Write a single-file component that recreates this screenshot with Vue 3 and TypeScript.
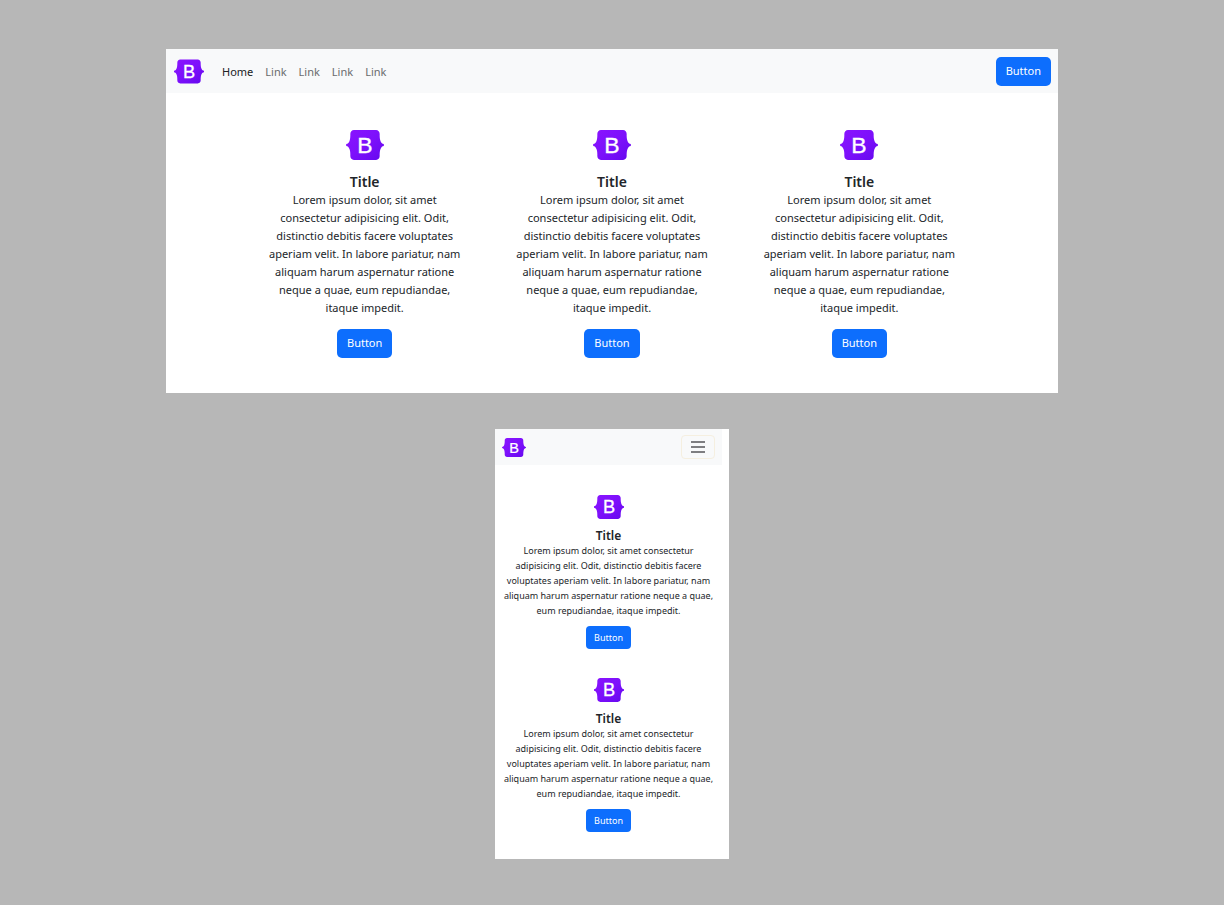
<script setup lang="ts">
interface NavLink {
  id: number
  label: string
  active: boolean
}

interface Feature {
  id: number
  title: string
  text: string
  action: string
}

const links: NavLink[] = [
  { id: 1, label: 'Home', active: true },
  { id: 2, label: 'Link', active: false },
  { id: 3, label: 'Link', active: false },
  { id: 4, label: 'Link', active: false },
  { id: 5, label: 'Link', active: false },
]

const wideText = [
  'Lorem ipsum dolor, sit amet',
  'consectetur adipisicing elit. Odit,',
  'distinctio debitis facere voluptates',
  'aperiam velit. In labore pariatur, nam',
  'aliquam harum aspernatur ratione',
  'neque a quae, eum repudiandae,',
  'itaque impedit.',
].join('\n')

const narrowText = [
  'Lorem ipsum dolor, sit amet consectetur',
  'adipisicing elit. Odit, distinctio debitis facere',
  'voluptates aperiam velit. In labore pariatur, nam',
  'aliquam harum aspernatur ratione neque a quae,',
  'eum repudiandae, itaque impedit.',
].join('\n')

function makeFeatures(count: number, text: string): Feature[] {
  return Array.from({ length: count }, (_, i) => ({
    id: i + 1,
    title: 'Title',
    text,
    action: 'Button',
  }))
}

const wideFeatures = makeFeatures(3, wideText)
const narrowFeatures = makeFeatures(2, narrowText)
</script>

<template>
  <svg class="defs" aria-hidden="true">
    <defs>
      <linearGradient id="brand-fill" x1="0" y1="0" x2="1" y2="1">
        <stop offset="0" stop-color="#8a14ff" />
        <stop offset="0.5" stop-color="#7d10fb" />
        <stop offset="1" stop-color="#6508ee" />
      </linearGradient>
      <symbol id="brand" viewBox="0 0 512 408">
        <path
          fill="url(#brand-fill)"
          d="M106.342 0c-29.214 0-50.827 25.58-49.86 53.32.927 26.647-.278 61.165-8.966 89.31C38.802 170.862 24.07 188.707 0 191v26c24.069 2.293 38.802 20.138 47.516 48.37 8.688 28.145 9.893 62.663 8.965 89.311C55.515 382.419 77.128 408 106.342 408h299.353c29.214 0 50.827-25.58 49.861-53.319-.928-26.648.277-61.166 8.964-89.311 8.715-28.232 23.411-46.077 47.48-48.37v-26c-24.069-2.293-38.765-20.138-47.48-48.37-8.687-28.145-9.892-62.663-8.964-89.31C456.522 25.58 434.909 0 405.695 0H106.342z"
        />
        <text
          x="256"
          y="312"
          text-anchor="middle"
          font-family="Liberation Sans, Arial, sans-serif"
          font-size="312"
          font-weight="400"
          fill="#fff"
          stroke="#fff"
          stroke-width="5"
        >B</text>
      </symbol>
    </defs>
  </svg>

  <main class="stage">
    <section class="screen wide">
      <nav class="navbar">
        <svg class="brand" role="img" aria-label="Bootstrap"><use href="#brand" /></svg>
        <ul class="links">
          <li v-for="link in links" :key="link.id">
            <a href="#" class="link" :class="{ active: link.active }">{{ link.label }}</a>
          </li>
        </ul>
        <button type="button" class="btn">Button</button>
      </nav>
      <div class="features">
        <article v-for="item in wideFeatures" :key="item.id" class="feature">
          <svg class="mark" aria-hidden="true"><use href="#brand" /></svg>
          <h2 class="title">{{ item.title }}</h2>
          <p class="text">{{ item.text }}</p>
          <button type="button" class="btn">{{ item.action }}</button>
        </article>
      </div>
    </section>

    <section class="screen narrow">
      <nav class="navbar">
        <svg class="brand" role="img" aria-label="Bootstrap"><use href="#brand" /></svg>
        <button type="button" class="toggler" aria-label="Toggle navigation">
          <svg class="bars" viewBox="0 0 16 12" aria-hidden="true">
            <path d="M1 1h14M1 6h14M1 11h14" />
          </svg>
        </button>
      </nav>
      <div class="features">
        <article v-for="item in narrowFeatures" :key="item.id" class="feature">
          <svg class="mark" aria-hidden="true"><use href="#brand" /></svg>
          <h2 class="title">{{ item.title }}</h2>
          <p class="text">{{ item.text }}</p>
          <button type="button" class="btn">{{ item.action }}</button>
        </article>
      </div>
    </section>
  </main>
</template>

<style>
body {
  margin: 0;
  background: #b7b7b7;
}
</style>

<style scoped>
.defs {
  position: absolute;
  width: 0;
  height: 0;
}

.stage {
  box-sizing: border-box;
  min-height: 100vh;
  padding: 49px 16px 46px;
  display: flex;
  flex-direction: column;
  align-items: center;
  gap: 36px;
  background: #b7b7b7;
  color: #212529;
  font-family: 'Noto Sans', 'Open Sans', sans-serif;
}

.screen {
  box-sizing: border-box;
  width: 100%;
  background: #fff;
}

.navbar {
  display: flex;
  align-items: center;
  background: #f8f9fa;
}

.links {
  flex: 1;
  display: flex;
  gap: 12px;
  margin: 0;
  padding: 0;
  list-style: none;
}

.link {
  color: #6a6b6d;
  text-decoration: none;
}

.link.active {
  color: #202124;
}

.btn {
  display: block;
  box-sizing: border-box;
  border: 0;
  background: #0d6efd;
  color: #fff;
  font-family: inherit;
  cursor: pointer;
}

.feature {
  display: flex;
  flex-direction: column;
  align-items: center;
  text-align: center;
}

.title,
.text {
  margin: 0;
}

.title {
  font-weight: 600;
}

.text {
  white-space: pre;
}

.wide {
  max-width: 892px;
  font-size: 11px;
  line-height: 18px;
}

.wide .navbar {
  padding: 8px 7px 7px 8px;
}

.wide .brand {
  width: 30px;
  height: 25px;
  margin-right: 18px;
}

.wide .btn {
  padding: 5px 10px 6px;
  border-radius: 5px;
  font-size: 11px;
  line-height: 18px;
}

.wide .features {
  display: grid;
  grid-template-columns: repeat(3, 1fr);
  max-width: 742px;
  margin: 0 auto;
  padding: 37px 0 35px;
}

.wide .mark {
  width: 38px;
  height: 30px;
}

.wide .title {
  margin-top: 13px;
  font-size: 14px;
  line-height: 18px;
}

.wide .text {
  margin-bottom: 12px;
}

.narrow {
  max-width: 234px;
  padding-right: 7px;
  font-size: 9px;
  line-height: 15px;
}

.narrow .navbar {
  justify-content: space-between;
  padding: 6px 7px;
}

.narrow .brand {
  width: 24px;
  height: 19px;
}

.toggler {
  display: flex;
  align-items: center;
  justify-content: center;
  box-sizing: border-box;
  width: 34px;
  height: 24px;
  padding: 0;
  border: 1px solid #f5efe0;
  border-radius: 4px;
  background: transparent;
  cursor: pointer;
}

.bars {
  width: 16px;
  height: 12px;
  fill: none;
  stroke: #55565a;
  stroke-width: 1.5;
}

.narrow .features {
  display: flex;
  flex-direction: column;
  gap: 29px;
  padding: 30px 0 27px;
}

.narrow .mark {
  width: 30px;
  height: 24px;
}

.narrow .title {
  margin-top: 10px;
  font-size: 12px;
  line-height: 14px;
}

.narrow .text {
  margin-bottom: 8px;
}

.narrow .btn {
  padding: 4px 8px;
  border-radius: 4px;
  font-size: 9px;
  line-height: 15px;
}
</style>
